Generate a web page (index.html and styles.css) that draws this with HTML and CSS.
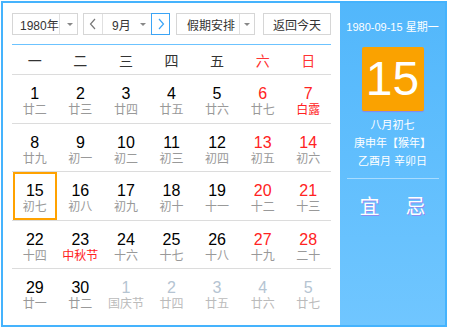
FILE: index.html
```html
<!DOCTYPE html>
<html lang="zh-CN">
<head>
    <meta charset="UTF-8">
    <title>万年历</title>
    <link rel="stylesheet" href="styles.css">
</head>
<body>
    <div class="calendar">
        <div class="main">
            <div class="toolbar">
                <div class="select year-select">
                    <span class="select-text">1980年</span>
                    <span class="select-arrow"></span>
                </div>
                <div class="select month-select">
                    <span class="nav-btn prev">
                        <svg width="8" height="12" viewBox="0 0 8 12"><path d="M6 1 L1.5 6 L6 11" fill="none" stroke="#777" stroke-width="1.2"/></svg>
                    </span>
                    <span class="select-text month-text">9月</span>
                    <span class="select-arrow plain"></span>
                    <span class="nav-btn next">
                        <svg width="8" height="12" viewBox="0 0 8 12"><path d="M2 1 L6.5 6 L2 11" fill="none" stroke="#3ba4f5" stroke-width="1.2"/></svg>
                    </span>
                </div>
                <div class="select holiday-select">
                    <span class="select-text">假期安排</span>
                    <span class="select-arrow"></span>
                </div>
                <button class="today-btn">返回今天</button>
            </div>

            <div class="week">
                <span>一</span><span>二</span><span>三</span><span>四</span><span>五</span>
                <span class="weekend">六</span><span class="weekend">日</span>
            </div>

            <div class="days">
                <div class="row">
                    <div class="day"><b>1</b><i>廿二</i></div>
                    <div class="day"><b>2</b><i>廿三</i></div>
                    <div class="day"><b>3</b><i>廿四</i></div>
                    <div class="day"><b>4</b><i>廿五</i></div>
                    <div class="day"><b>5</b><i>廿六</i></div>
                    <div class="day weekend"><b>6</b><i>廿七</i></div>
                    <div class="day weekend"><b>7</b><i class="festival">白露</i></div>
                </div>
                <div class="row">
                    <div class="day"><b>8</b><i>廿九</i></div>
                    <div class="day"><b>9</b><i>初一</i></div>
                    <div class="day"><b>10</b><i>初二</i></div>
                    <div class="day"><b>11</b><i>初三</i></div>
                    <div class="day"><b>12</b><i>初四</i></div>
                    <div class="day weekend"><b>13</b><i>初五</i></div>
                    <div class="day weekend"><b>14</b><i>初六</i></div>
                </div>
                <div class="row">
                    <div class="day selected"><b>15</b><i>初七</i></div>
                    <div class="day"><b>16</b><i>初八</i></div>
                    <div class="day"><b>17</b><i>初九</i></div>
                    <div class="day"><b>18</b><i>初十</i></div>
                    <div class="day"><b>19</b><i>十一</i></div>
                    <div class="day weekend"><b>20</b><i>十二</i></div>
                    <div class="day weekend"><b>21</b><i>十三</i></div>
                </div>
                <div class="row">
                    <div class="day"><b>22</b><i>十四</i></div>
                    <div class="day"><b>23</b><i class="festival">中秋节</i></div>
                    <div class="day"><b>24</b><i>十六</i></div>
                    <div class="day"><b>25</b><i>十七</i></div>
                    <div class="day"><b>26</b><i>十八</i></div>
                    <div class="day weekend"><b>27</b><i>十九</i></div>
                    <div class="day weekend"><b>28</b><i>二十</i></div>
                </div>
                <div class="row last">
                    <div class="day"><b>29</b><i>廿一</i></div>
                    <div class="day"><b>30</b><i>廿二</i></div>
                    <div class="day other"><b>1</b><i>国庆节</i></div>
                    <div class="day other"><b>2</b><i>廿四</i></div>
                    <div class="day other"><b>3</b><i>廿五</i></div>
                    <div class="day other"><b>4</b><i>廿六</i></div>
                    <div class="day other"><b>5</b><i>廿七</i></div>
                </div>
            </div>
        </div>

        <div class="side">
            <div class="side-date">1980-09-15 星期一</div>
            <div class="big-day">15</div>
            <div class="lunar">
                <p>八月初七</p>
                <p>庚申年【猴年】</p>
                <p>乙酉月 辛卯日</p>
            </div>
            <div class="yiji">
                <span>宜</span>
                <span>忌</span>
            </div>
        </div>
    </div>
</body>
</html>
```

FILE: styles.css
```css
* {
    margin: 0;
    padding: 0;
    box-sizing: border-box;
}

body {
    background-color: #fff;
    font-family: "Liberation Sans", "Noto Sans CJK SC", sans-serif;
    padding: 1px;
}

.calendar {
    width: 446px;
    height: 326px;
    border: 2px solid #45b3fd;
    display: flex;
}

.main {
    width: 337px;
    padding: 10px 9px 0 9px;
}

.toolbar {
    display: flex;
    height: 22px;
    font-size: 12px;
    color: #333;
    white-space: nowrap;
}

.select {
    display: flex;
    align-items: stretch;
    border: 1px solid #d6d6d6;
    background-color: #fff;
}

.select-text {
    display: flex;
    align-items: center;
    padding-left: 8px;
    flex: 1;
}

.select-arrow {
    width: 20px;
    flex: none;
    border-left: 1px solid #e0e0e0;
    position: relative;
}

.select-arrow::after {
    content: "";
    position: absolute;
    left: 7px;
    top: 9px;
    border-left: 3px solid transparent;
    border-right: 3px solid transparent;
    border-top: 3px solid #888;
}

.select-arrow.plain {
    width: 13px;
    border-left: none;
}

.select-arrow.plain::after {
    left: 2px;
}

.year-select {
    width: 66px;
}

.year-select .select-text {
    padding-left: 7px;
}

.month-select {
    width: 87px;
    margin-left: 5px;
}

.nav-btn {
    width: 19px;
    flex: none;
    display: flex;
    align-items: center;
    justify-content: center;
}

.prev {
    border-right: 1px solid #e0e0e0;
}

.next {
    margin: -1px -1px -1px 0;
    width: 19px;
    border: 1px solid #3ba4f5;
}

.month-text {
    padding-left: 9px;
}

.holiday-select {
    width: 79px;
    margin-left: 6px;
}

.holiday-select .select-text {
    padding-left: 10px;
}

.holiday-select .select-arrow {
    width: 15px;
}

.holiday-select .select-arrow::after {
    left: 4px;
}

.today-btn {
    width: 68px;
    margin-left: 8px;
    border: 1px solid #d6d6d6;
    background-color: #fff;
    font-family: inherit;
    font-size: 12px;
    color: #333;
}

.week {
    margin-top: 9px;
    border-top: 1px solid #6cc3ff;
    border-bottom: 1px solid #dcdcdc;
    height: 31px;
    display: grid;
    grid-template-columns: repeat(7, 1fr);
    align-items: center;
    text-align: center;
    font-size: 14px;
    color: #333;
}

.week .weekend {
    color: #f33;
}

.row {
    display: grid;
    grid-template-columns: repeat(7, 1fr);
    height: 48.5px;
    border-bottom: 1px solid #dcdcdc;
}

.row.last {
    border-bottom: none;
}

.day {
    text-align: center;
    padding-top: 10px;
}

.day b {
    display: block;
    font-weight: normal;
    font-size: 16px;
    line-height: 18px;
    color: #000;
}

.day i {
    display: block;
    font-style: normal;
    font-size: 12px;
    line-height: 14px;
    color: #999;
}

.day.weekend b {
    color: #f22;
}

.day i.festival {
    color: #f22;
}

.day.selected {
    border: 2px solid #ffa200;
    padding-top: 8px;
    margin-left: 1px;
    margin-right: 1px;
}

.day.other b {
    color: #b5c4d2;
}

.day.other i {
    color: #bbb;
}

.side {
    flex: 1;
    background: linear-gradient(#52b7fb, #70c6ff);
    color: #fff;
    display: flex;
    flex-direction: column;
    align-items: center;
}

.side-date {
    margin-top: 16px;
    font-size: 11px;
    line-height: 16px;
    white-space: nowrap;
}

.big-day {
    margin-top: 12px;
    width: 62px;
    height: 64px;
    background-color: #faa200;
    border-radius: 2px;
    box-shadow: 0 1px 1px #8a86e8;
    font-size: 48px;
    line-height: 64px;
    text-align: center;
}

.lunar {
    margin-top: 5px;
    font-size: 11px;
    line-height: 18px;
    text-align: center;
}

.yiji {
    margin-top: 8px;
    width: 92px;
    border-top: 1px solid #a8dcff;
    display: flex;
    justify-content: space-around;
    padding-top: 12px;
    font-size: 20px;
    text-shadow: 1px 1px 0 #8d8cf0;
}
```
